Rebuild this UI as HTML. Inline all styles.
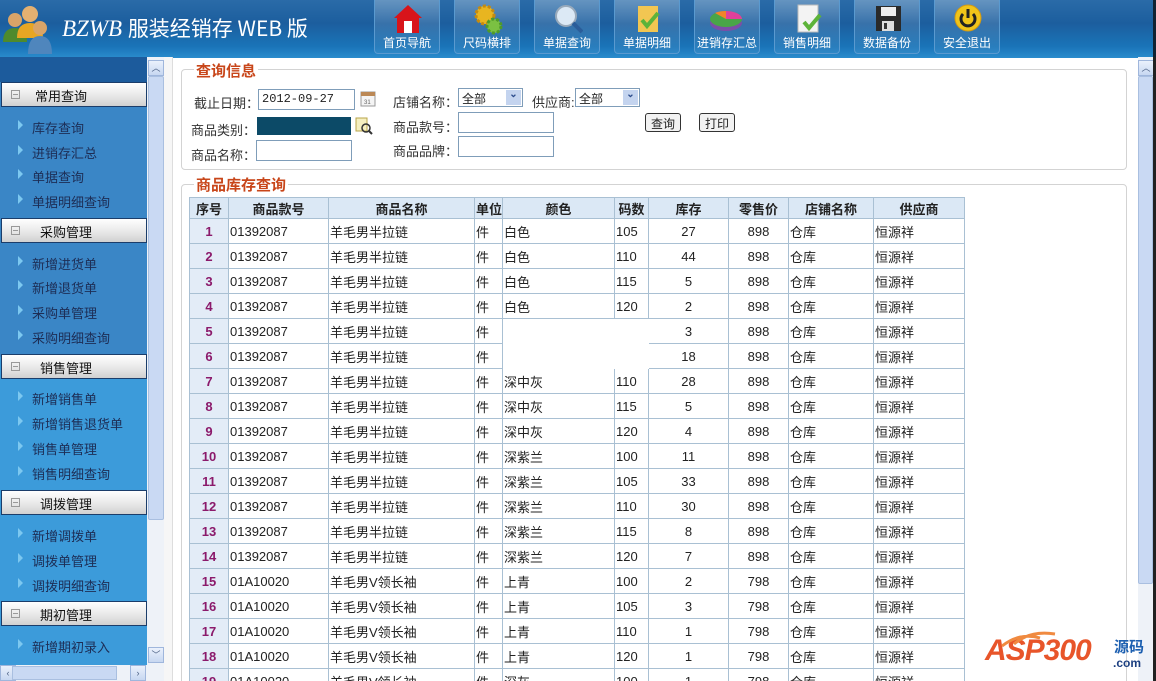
<!DOCTYPE html>
<html style="overflow:hidden;width:1156px;height:681px"><head><meta charset="utf-8"><style>
*{margin:0;padding:0;box-sizing:border-box}
body{width:1156px;height:681px;overflow:hidden;position:relative;background:#fff;font-family:"Liberation Sans","Noto Sans CJK SC",sans-serif;font-size:13px;color:#222}
.a{position:absolute}
#hdr{left:0;top:0;width:1156px;height:58px;background:linear-gradient(#2a6ba8,#1c5e9e 40%,#1a74b8 80%,#2a8ccd)}
.btn{position:absolute;top:0;width:66px;height:54px;border:1px solid #5a9ad0;border-top:none;border-radius:0 0 4px 4px;background:linear-gradient(rgba(255,255,255,.28),rgba(255,255,255,.12) 45%,rgba(255,255,255,.05));color:#fff;font-size:12px;text-align:center}
.btn span{position:absolute;left:0;right:0;bottom:2px}
.btn svg{position:absolute;left:18px;top:3px}
.side{left:0;top:57px;width:147px;height:608px;background:#3a86c6;overflow:hidden}
.gh{position:absolute;left:1px;width:146px;height:25px;background:linear-gradient(#fff,#e6e6e6 60%,#d0d0d0);border:1px solid #1b3d6a;font-size:13px;color:#111}
.gh i{position:absolute;left:9px;top:7px;width:9px;height:9px;border:1px solid #999;font-style:normal}
.gh i:after{content:"";position:absolute;left:1px;top:3px;width:5px;height:1px;background:#999}
.gh b{font-weight:normal;position:absolute;left:38px;top:3px}
.it{position:absolute;left:0;width:147px;height:25px;font-size:13px;color:#1d2d55}
.it:before{content:"";position:absolute;left:18px;top:6px;border-left:5px solid #7cc8f0;border-top:5px solid transparent;border-bottom:5px solid transparent}
.it span{position:absolute;left:32px;top:4px}
.sb{background:#c9d9f3;border:1px solid #a9bfe0}
.sbtn{position:absolute;width:16px;height:16px;background:linear-gradient(#eaf1fc,#c7d7f1);border:1px solid #9fb6dc;font-size:9px;color:#4d6185;text-align:center;line-height:14px}
fieldset{position:absolute;border:1px solid #d3d3d3;border-radius:4px}
.lg{position:absolute;background:#fff;color:#c8461a;font-weight:bold;font-size:15px;padding:0 2px}
.lbl{position:absolute;font-size:13px;color:#333}
.inp{position:absolute;height:21px;border:1px solid #7f9db9;background:#fff;font-size:12px;padding:2px 3px;font-family:"Liberation Mono","Noto Sans CJK SC",monospace}
.sel{position:absolute;height:19px;border:1px solid #7f9db9;background:#fff;font-size:12px;padding:1px 3px}
.sel:after{content:"⌄";position:absolute;right:1px;top:1px;width:15px;height:15px;background:#c4d4ef;color:#2c4c8c;font-size:10px;text-align:center;line-height:9px;font-weight:bold}
.pb{position:absolute;height:19px;border:1px solid #333;border-radius:3px;background:#f2f2f2;font-size:12px;padding:1px 5px}
table{position:absolute;left:189px;top:197px;border-collapse:collapse;font-size:13px;table-layout:fixed;width:775px}
td,th{border:1px solid #a9c0d3;height:25px;padding:0 1px;white-space:nowrap;overflow:hidden}
th{background:#dbe8f5;height:21px;font-weight:bold;font-size:13px;color:#222}
td.n{background:#e3ecf7;text-align:center;color:#8b1a6b;font-weight:bold}
td.c{text-align:center}
td.bl{border-color:#fff;background:#fff}
</style></head><body>
<div id="hdr" class="a">
 <svg class="a" style="left:0;top:2px" width="58" height="52" viewBox="0 0 58 52">
  <circle cx="15" cy="18" r="7" fill="#d9a468"/><path d="M3 40 Q3 26 15 26 Q27 26 27 40Z" fill="#4e8a2d"/>
  <circle cx="30" cy="12" r="8" fill="#e3b071"/><path d="M17 36 Q17 21 30 21 Q43 21 43 36Z" fill="#e8a623"/>
  <circle cx="40" cy="26" r="7" fill="#d9a468"/><path d="M28 52 Q28 34 40 34 Q52 34 52 52Z" fill="#4f86bd"/>
 </svg>
 <div class="a" style="left:62px;top:13px;color:#fff;font-size:23px;font-family:'Liberation Serif','Noto Sans CJK SC',serif;font-style:italic;letter-spacing:0">BZWB <span style="font-style:normal;font-family:'Noto Sans CJK SC',sans-serif;font-size:21px">服装经销存 WEB 版</span></div>
 <div class="btn" style="left:374px"><svg width="30" height="32"><path d="M15 2 L29 15 L26 15 L26 30 L4 30 L4 15 L1 15Z" fill="#d8141a"/><rect x="11" y="18" width="8" height="12" fill="#fff"/></svg><span>首页导航</span></div>
 <div class="btn" style="left:454px"><svg width="30" height="32"><circle cx="12" cy="12" r="9" fill="#e8b520" stroke="#c48a10" stroke-width="3" stroke-dasharray="3 2"/><circle cx="21" cy="23" r="7" fill="#7bc142" stroke="#4e9a2a" stroke-width="3" stroke-dasharray="3 2"/></svg><span>尺码横排</span></div>
 <div class="btn" style="left:534px"><svg width="30" height="32"><circle cx="13" cy="13" r="10" fill="#dce9f5" stroke="#9ab" stroke-width="2"/><path d="M20 20 L29 29" stroke="#2a5d9a" stroke-width="4"/></svg><span>单据查询</span></div>
 <div class="btn" style="left:614px"><svg width="30" height="32"><rect x="5" y="3" width="20" height="26" fill="#f2c652"/><path d="M9 17 L14 23 L25 10" stroke="#5db33a" stroke-width="4" fill="none"/></svg><span>单据明细</span></div>
 <div class="btn" style="left:694px"><svg width="34" height="32" style="left:14px"><ellipse cx="17" cy="20" rx="16" ry="8" fill="#7b4ea7"/><ellipse cx="17" cy="16" rx="16" ry="8" fill="#49a548"/><path d="M17 16 L17 8 A16 8 0 0 1 33 16Z" fill="#e0409b"/><path d="M17 16 L6 10 A16 8 0 0 1 17 8Z" fill="#f2842a"/></svg><span>进销存汇总</span></div>
 <div class="btn" style="left:774px"><svg width="30" height="32"><rect x="5" y="2" width="20" height="27" fill="#f3f3f3" stroke="#bbb"/><path d="M11 19 L16 25 L27 12" stroke="#5db33a" stroke-width="4" fill="none"/></svg><span>销售明细</span></div>
 <div class="btn" style="left:854px"><svg width="30" height="32"><rect x="3" y="3" width="25" height="25" fill="#2a2a2a"/><rect x="8" y="4" width="15" height="9" fill="#eee"/><rect x="9" y="18" width="12" height="10" fill="#ddd"/><rect x="11" y="20" width="3" height="6" fill="#333"/></svg><span>数据备份</span></div>
 <div class="btn" style="left:934px"><svg width="32" height="32"><circle cx="15" cy="15" r="13" fill="#f0c419" stroke="#d59a10"/><path d="M10 11 A7 7 0 1 0 20 11" stroke="#222" stroke-width="3" fill="none"/><path d="M15 6 L15 15" stroke="#222" stroke-width="3"/></svg><span>安全退出</span></div>
 <div class="a" style="left:1153px;top:0;width:3px;height:58px;background:#123"></div>
</div>

<div class="a side">
 <div class="a" style="left:0;top:0;width:147px;height:25px;background:#1c5b9c"></div>
 <div class="a" style="left:0;top:300px;width:147px;height:308px;background:#3c9bda"></div>
 <div class="gh" style="top:25px"><i></i><b style="left:33px">常用查询</b></div>
 <div class="it" style="top:57px"><span>库存查询</span></div>
 <div class="it" style="top:82px"><span>进销存汇总</span></div>
 <div class="it" style="top:106px"><span>单据查询</span></div>
 <div class="it" style="top:131px"><span>单据明细查询</span></div>
 <div class="gh" style="top:161px"><i></i><b>采购管理</b></div>
 <div class="it" style="top:193px"><span>新增进货单</span></div>
 <div class="it" style="top:217px"><span>新增退货单</span></div>
 <div class="it" style="top:242px"><span>采购单管理</span></div>
 <div class="it" style="top:267px"><span>采购明细查询</span></div>
 <div class="gh" style="top:297px"><i></i><b>销售管理</b></div>
 <div class="it" style="top:328px"><span>新增销售单</span></div>
 <div class="it" style="top:353px"><span>新增销售退货单</span></div>
 <div class="it" style="top:378px"><span>销售单管理</span></div>
 <div class="it" style="top:403px"><span>销售明细查询</span></div>
 <div class="gh" style="top:433px"><i></i><b>调拨管理</b></div>
 <div class="it" style="top:465px"><span>新增调拨单</span></div>
 <div class="it" style="top:490px"><span>调拨单管理</span></div>
 <div class="it" style="top:515px"><span>调拨明细查询</span></div>
 <div class="gh" style="top:544px"><i></i><b>期初管理</b></div>
 <div class="it" style="top:576px"><span>新增期初录入</span></div>
</div>
<div class="a" style="left:147px;top:57px;width:17px;height:608px;background:#eef2f8"></div>
<div class="sbtn" style="left:148px;top:60px">︿</div>
<div class="a sb" style="left:148px;top:76px;width:16px;height:444px;border-radius:2px"></div>
<div class="sbtn" style="left:148px;top:647px">﹀</div>
<div class="a" style="left:0;top:665px;width:164px;height:16px;background:#eef2f8"></div>
<div class="sbtn" style="left:0;top:665px">‹</div>
<div class="a sb" style="left:12px;top:666px;width:105px;height:14px"></div>
<div class="sbtn" style="left:130px;top:665px">›</div>
<div class="a" style="left:164px;top:57px;width:9px;height:624px;background:#f6f6f6;border-right:1px solid #ddd"></div>

<fieldset style="left:181px;top:69px;width:946px;height:101px"></fieldset>
<div class="lg" style="left:194px;top:60px">查询信息</div>
<div class="lbl" style="left:194px;top:93px">截止日期：</div>
<div class="inp" style="left:258px;top:89px;width:97px">2012-09-27</div>
<svg class="a" style="left:360px;top:89px" width="16" height="18"><rect x="1" y="3" width="14" height="14" fill="#f4f4f4" stroke="#999"/><rect x="1" y="3" width="14" height="4" fill="#b85"/><text x="4" y="15" font-size="6" fill="#666">31</text></svg>
<div class="lbl" style="left:191px;top:120px">商品类别：</div>
<div class="a" style="left:257px;top:117px;width:94px;height:18px;background:#0c4a67"></div>
<svg class="a" style="left:355px;top:117px" width="18" height="18"><rect x="1" y="1" width="11" height="13" fill="#f5efc0" stroke="#b9a54a"/><circle cx="11" cy="11" r="4" fill="none" stroke="#333" stroke-width="1.5"/><path d="M14 14 L17 17" stroke="#333" stroke-width="2"/></svg>
<div class="lbl" style="left:191px;top:145px">商品名称：</div>
<div class="inp" style="left:256px;top:140px;width:96px"></div>
<div class="lbl" style="left:393px;top:92px">店铺名称：</div>
<div class="sel" style="left:458px;top:88px;width:65px">全部</div>
<div class="lbl" style="left:532px;top:92px">供应商:</div>
<div class="sel" style="left:575px;top:88px;width:65px">全部</div>
<div class="lbl" style="left:393px;top:117px">商品款号：</div>
<div class="inp" style="left:458px;top:112px;width:96px"></div>
<div class="lbl" style="left:393px;top:141px">商品品牌：</div>
<div class="inp" style="left:458px;top:136px;width:96px"></div>
<div class="pb" style="left:645px;top:113px">查询</div>
<div class="pb" style="left:699px;top:113px">打印</div>

<fieldset style="left:181px;top:184px;width:946px;height:520px"></fieldset>
<div class="lg" style="left:194px;top:174px">商品库存查询</div>

<table>
<colgroup><col style="width:39px"><col style="width:100px"><col style="width:146px"><col style="width:28px"><col style="width:112px"><col style="width:34px"><col style="width:80px"><col style="width:60px"><col style="width:85px"><col style="width:91px"></colgroup>
<tr><th>序号</th><th>商品款号</th><th>商品名称</th><th>单位</th><th>颜色</th><th>码数</th><th>库存</th><th>零售价</th><th>店铺名称</th><th>供应商</th></tr>
<tr><td class="n">1</td><td>01392087</td><td>羊毛男半拉链</td><td>件</td><td>白色</td><td>105</td><td class="c">27</td><td class="c">898</td><td>仓库</td><td>恒源祥</td></tr>
<tr><td class="n">2</td><td>01392087</td><td>羊毛男半拉链</td><td>件</td><td>白色</td><td>110</td><td class="c">44</td><td class="c">898</td><td>仓库</td><td>恒源祥</td></tr>
<tr><td class="n">3</td><td>01392087</td><td>羊毛男半拉链</td><td>件</td><td>白色</td><td>115</td><td class="c">5</td><td class="c">898</td><td>仓库</td><td>恒源祥</td></tr>
<tr><td class="n">4</td><td>01392087</td><td>羊毛男半拉链</td><td>件</td><td>白色</td><td>120</td><td class="c">2</td><td class="c">898</td><td>仓库</td><td>恒源祥</td></tr>
<tr><td class="n">5</td><td>01392087</td><td>羊毛男半拉链</td><td>件</td><td class="bl"></td><td class="bl"></td><td class="c">3</td><td class="c">898</td><td>仓库</td><td>恒源祥</td></tr>
<tr><td class="n">6</td><td>01392087</td><td>羊毛男半拉链</td><td>件</td><td class="bl"></td><td class="bl"></td><td class="c">18</td><td class="c">898</td><td>仓库</td><td>恒源祥</td></tr>
<tr><td class="n">7</td><td>01392087</td><td>羊毛男半拉链</td><td>件</td><td>深中灰</td><td>110</td><td class="c">28</td><td class="c">898</td><td>仓库</td><td>恒源祥</td></tr>
<tr><td class="n">8</td><td>01392087</td><td>羊毛男半拉链</td><td>件</td><td>深中灰</td><td>115</td><td class="c">5</td><td class="c">898</td><td>仓库</td><td>恒源祥</td></tr>
<tr><td class="n">9</td><td>01392087</td><td>羊毛男半拉链</td><td>件</td><td>深中灰</td><td>120</td><td class="c">4</td><td class="c">898</td><td>仓库</td><td>恒源祥</td></tr>
<tr><td class="n">10</td><td>01392087</td><td>羊毛男半拉链</td><td>件</td><td>深紫兰</td><td>100</td><td class="c">11</td><td class="c">898</td><td>仓库</td><td>恒源祥</td></tr>
<tr><td class="n">11</td><td>01392087</td><td>羊毛男半拉链</td><td>件</td><td>深紫兰</td><td>105</td><td class="c">33</td><td class="c">898</td><td>仓库</td><td>恒源祥</td></tr>
<tr><td class="n">12</td><td>01392087</td><td>羊毛男半拉链</td><td>件</td><td>深紫兰</td><td>110</td><td class="c">30</td><td class="c">898</td><td>仓库</td><td>恒源祥</td></tr>
<tr><td class="n">13</td><td>01392087</td><td>羊毛男半拉链</td><td>件</td><td>深紫兰</td><td>115</td><td class="c">8</td><td class="c">898</td><td>仓库</td><td>恒源祥</td></tr>
<tr><td class="n">14</td><td>01392087</td><td>羊毛男半拉链</td><td>件</td><td>深紫兰</td><td>120</td><td class="c">7</td><td class="c">898</td><td>仓库</td><td>恒源祥</td></tr>
<tr><td class="n">15</td><td>01A10020</td><td>羊毛男V领长袖</td><td>件</td><td>上青</td><td>100</td><td class="c">2</td><td class="c">798</td><td>仓库</td><td>恒源祥</td></tr>
<tr><td class="n">16</td><td>01A10020</td><td>羊毛男V领长袖</td><td>件</td><td>上青</td><td>105</td><td class="c">3</td><td class="c">798</td><td>仓库</td><td>恒源祥</td></tr>
<tr><td class="n">17</td><td>01A10020</td><td>羊毛男V领长袖</td><td>件</td><td>上青</td><td>110</td><td class="c">1</td><td class="c">798</td><td>仓库</td><td>恒源祥</td></tr>
<tr><td class="n">18</td><td>01A10020</td><td>羊毛男V领长袖</td><td>件</td><td>上青</td><td>120</td><td class="c">1</td><td class="c">798</td><td>仓库</td><td>恒源祥</td></tr>
<tr><td class="n">19</td><td>01A10020</td><td>羊毛男V领长袖</td><td>件</td><td>深灰</td><td>100</td><td class="c">1</td><td class="c">798</td><td>仓库</td><td>恒源祥</td></tr>
</table>

<div class="a" style="left:1138px;top:57px;width:15px;height:624px;background:#eef2f8"></div>
<div class="sbtn" style="left:1138px;top:60px">︿</div>
<div class="a sb" style="left:1138px;top:76px;width:15px;height:508px;border-radius:2px"></div>
<div class="a" style="left:1153px;top:57px;width:3px;height:624px;background:#222"></div>

<div class="a" style="left:985px;top:634px;font-size:30px;font-weight:bold;font-style:italic;color:#e8552a;letter-spacing:-1px;font-family:'Liberation Sans',sans-serif">ASP300</div>
<svg class="a" style="left:1000px;top:628px" width="60" height="20"><path d="M2 18 Q20 4 40 10 M14 16 Q30 2 55 6" stroke="#f08a40" stroke-width="3" fill="none"/></svg>
<div class="a" style="left:1114px;top:636px;font-size:15px;font-weight:bold;color:#1c5fb0">源码</div>
<div class="a" style="left:1113px;top:656px;font-size:12px;font-weight:bold;color:#1c3f80">.com</div>
</body></html>
